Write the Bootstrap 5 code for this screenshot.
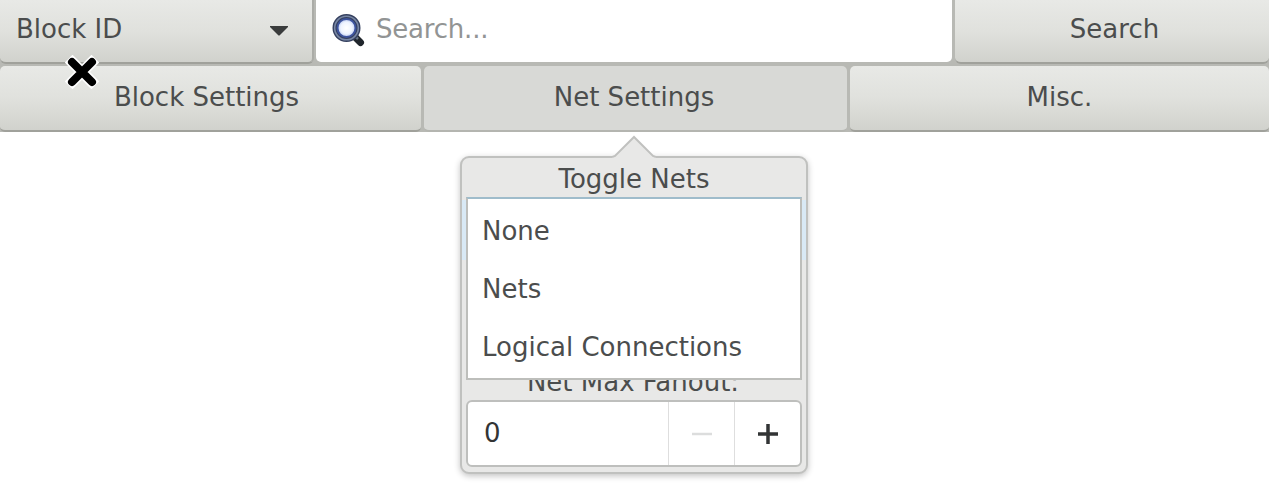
<!DOCTYPE html>
<html lang="en">
<head>
<meta charset="utf-8">
<meta name="viewport" content="width=device-width, initial-scale=1">
<title>Net Settings</title>
<link href="https://cdn.jsdelivr.net/npm/bootstrap@5.3.0/dist/css/bootstrap.min.css" rel="stylesheet">
<style>
body{font-family:"DejaVu Sans",sans-serif;font-size:26px;line-height:32px;color:#4b4d4d;background:#fff;min-height:100vh}
.toolbar{background:#b8b9b4}
.tool{border:0;border-radius:5px;background:linear-gradient(#e8e9e6,#e0e1dd 50%,#d1d2cd);border-bottom:2px solid #a0a19b;color:inherit;font-size:inherit;line-height:32px;padding:0}
.row-top{height:64px}
.row-top .tool{height:64px;border-radius:0 0 6px 6px;padding-bottom:5px}
.row-tabs{height:68px;gap:3px;padding-top:2px}
.row-tabs .tool{height:66px;padding-bottom:3px}
.tool.selected{background:#d8d9d6;border-color:#b4b5b0}
.by{width:314px;padding-left:16px!important;padding-right:24px!important;border-right:2px solid #abaca7!important}
.by svg{margin-top:4px}
.finder{width:636px;height:62px;margin-left:2px;border-radius:0 0 5px 5px;padding:0 0 5px 14px;color:#929494}
.finder span{margin-left:10px;letter-spacing:-.2px}
.go{width:314px;padding-left:5px}
.w-a{width:421px;padding-right:8px}.w-b{width:423px;padding-right:3px}.w-c{width:419px}
.pointer{left:65px;top:55px;z-index:5}
.settings{width:348px;height:318px;margin-left:460px;border:2px solid #c0c1bf;border-radius:9px;background:#e8e8e7;box-shadow:0 2px 6px rgba(0,0,0,.24);padding:4px}
.tip{left:150px;top:-23px}
.heading{height:32px;padding-top:1px}
.focus-rim{left:0;right:0;top:42px;height:60px;background:#d9e9f5}
.choices{left:4px;top:39px;width:336px;height:183px;background:#fff;border:2px solid #bdbebb;border-top-color:#9fbccb;padding:3px 0 0 14px}
.choices li{height:58px;line-height:58px}
.fanout{margin-top:172px;height:34px;padding-right:2px}
.spin{height:67px;background:#fff;border:2px solid #bebfbd;border-radius:6px;color:#323435}
.spin .amount{width:201px;padding:0 0 2px 16px}
.spin button{width:66px;border:0;border-left:1px solid #dedede;background:transparent;padding:0}
</style>
</head>
<body>
<header class="toolbar position-relative mb-4">
  <div class="row-top d-flex">
    <button class="tool by d-flex align-items-center justify-content-between">
      <span>Block ID</span>
      <svg width="18" height="10" viewBox="0 0 18 10"><path d="M0 0H18V1L10 9Q9 10 8 9L0 1Z" fill="#3a3c3c"/></svg>
    </button>
    <div class="finder bg-white d-flex align-items-center">
      <svg width="36" height="36" viewBox="0 0 36 36" class="mt-1">
        <defs><radialGradient id="glass"><stop offset="0" stop-color="#fff"/><stop offset=".5" stop-color="#eef4ff"/><stop offset="1" stop-color="#8fa6e4"/></radialGradient></defs>
        <path d="M24 23L30.500 29.500" stroke="#20262c" stroke-width="7" stroke-linecap="round"/>
        <path d="M24 22L28 26" stroke="#687482" stroke-width="2.500"/>
        <circle cx="16.500" cy="15" r="11.500" fill="url(#glass)" stroke="#35405f" stroke-width="5"/>
        <circle cx="16.500" cy="15" r="11.800" fill="none" stroke="#7887a5" stroke-width="1.600"/>
        <circle cx="16.500" cy="15" r="9" fill="none" stroke="#3d539d" stroke-width="2"/>
      </svg>
      <span>Search...</span>
    </div>
    <button class="tool go ms-auto">Search</button>
  </div>
  <nav class="row-tabs d-flex">
    <button class="tool w-a">Block Settings</button>
    <button class="tool selected w-b">Net Settings</button>
    <button class="tool w-c flex-grow-1">Misc.</button>
  </nav>
  <svg class="pointer position-absolute" width="34" height="34" viewBox="0 0 34 34"><path d="M7.500 7.500L26.500 26.500M26.500 7.500L7.500 26.500" stroke="#fff" stroke-width="11" stroke-linecap="square"/><path d="M7 7L27 27M27 7L7 27" stroke="#000" stroke-width="8" stroke-linecap="round"/></svg>
</header>
<section class="settings position-relative">
  <svg class="tip position-absolute" width="44" height="24" viewBox="0 0 44 24"><path d="M0 22L3 21L22 2L41 21L44 22V24H0Z" fill="#e8e8e7"/><path d="M0 22L3 21L22 2L41 21L44 22" fill="none" stroke="#c0c1bf" stroke-width="2"/></svg>
  <div class="heading text-center">Toggle Nets</div>
  <div class="fanout text-center">Net Max Fanout:</div>
  <div class="spin d-flex">
    <div class="amount d-flex align-items-center">0</div>
    <button aria-label="Decrease"><svg width="22" height="22" class="d-block mx-auto"><path d="M1 11H21" stroke="#dcdddd" stroke-width="2.500"/></svg></button>
    <button aria-label="Increase"><svg width="22" height="22" class="d-block mx-auto"><path d="M1 11H21M11 1V21" stroke="#323435" stroke-width="3.500"/></svg></button>
  </div>
  <div class="focus-rim position-absolute"></div>
  <ul class="choices list-unstyled position-absolute mb-0">
    <li>None</li><li>Nets</li><li>Logical Connections</li>
  </ul>
</section>
<script src="https://cdn.jsdelivr.net/npm/bootstrap@5.3.0/dist/js/bootstrap.bundle.min.js"></script>
</body>
</html>
